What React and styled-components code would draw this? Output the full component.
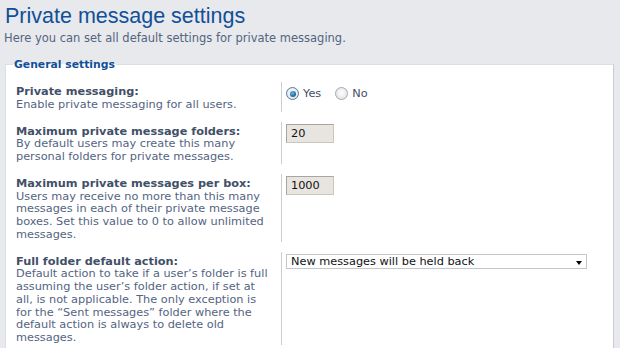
import React from 'react'
import styled, { createGlobalStyle } from 'styled-components'

const GlobalStyle = createGlobalStyle`
  html, body {
    margin: 0;
    padding: 0;
    background: #e7e9ec;
    font-family: "DejaVu Sans", Verdana, sans-serif;
  }
`

const Page = styled.div`
  width: 620px;
  height: 348px;
  overflow: hidden;
  padding: 3px 6px 0 5px;
  box-sizing: border-box;
`

const Title = styled.h1`
  margin: 0;
  font-family: "Liberation Sans", Arial, sans-serif;
  font-weight: normal;
  font-size: 21.5px;
  line-height: 26px;
  color: #115098;
`

const Intro = styled.p`
  margin: 2px 0 0 -1px;
  font-size: 11.5px;
  line-height: 14px;
  color: #536482;
`

const Fieldset = styled.fieldset`
  margin: 13px 0 0 0;
  padding: 11px 10px 0 10px;
  background: #fff;
  border: 1px solid #dcdfe3;
  border-right-color: #c9ccd0;
  min-width: 0;
`

const Legend = styled.legend`
  padding: 0 1px;
  margin-left: -3px;
  font-size: 10.8px;
  font-weight: bold;
  color: #115098;
`

const Row = styled.div`
  display: grid;
  grid-template-columns: 265px 1fr;
  margin-bottom: 10px;
`

const Term = styled.div`
  padding: 4px 0 0 0;
  font-size: 11.3px;
  line-height: 12.75px;
  white-space: nowrap;
  overflow: hidden;
  color: #536482;
`

const Label = styled.div`
  font-weight: bold;
  color: #425067;
`

const Value = styled.div`
  border-left: 1px solid #cccccc;
  padding: 2px 0 0 4px;
  display: flex;
  align-items: flex-start;
  gap: 14px;
`

const Choice = styled.label`
  display: flex;
  align-items: center;
  gap: 4px;
  margin-top: 3px;
  font-size: 11.3px;
  color: #425067;
`

const Radio = styled.span`
  width: 11px;
  height: 11px;
  border-radius: 50%;
  border: 1px solid ${p => (p.checked ? '#5b7a99' : '#a4a8ad')};
  background: radial-gradient(circle at 50% 45%, #ffffff 0%, #e4e6e8 70%, #d0d3d6 100%);
  display: flex;
  align-items: center;
  justify-content: center;

  &::after {
    content: '';
    display: ${p => (p.checked ? 'block' : 'none')};
    width: 6px;
    height: 6px;
    border-radius: 50%;
    background: radial-gradient(circle at 40% 35%, #6fb9e6 0%, #1a6fa8 60%, #0c4a78 100%);
  }
`

const TextInput = styled.div`
  width: 42px;
  height: 17px;
  box-sizing: content-box;
  border: 1px solid #c9c6c0;
  border-top-color: #a9a6a1;
  border-left-color: #a9a6a1;
  background: #e8e5e0;
  font-size: 11.3px;
  line-height: 17px;
  padding-left: 4px;
  color: #111;
`

const Select = styled.div`
  position: relative;
  width: 295px;
  height: 13px;
  border: 1px solid #c3c7cc;
  background: #fff;
  font-size: 11.3px;
  line-height: 13px;
  padding-left: 4px;
  color: #111;

  &::after {
    content: '';
    position: absolute;
    right: 4px;
    top: 6px;
    border-left: 3.5px solid transparent;
    border-right: 3.5px solid transparent;
    border-top: 4px solid #000;
  }
`

const settings = [
  {
    label: 'Private messaging:',
    desc: ['Enable private messaging for all users.'],
    type: 'radio',
  },
  {
    label: 'Maximum private message folders:',
    desc: ['By default users may create this many', 'personal folders for private messages.'],
    type: 'text',
    value: '20',
  },
  {
    label: 'Maximum private messages per box:',
    desc: [
      'Users may receive no more than this many',
      'messages in each of their private message',
      'boxes. Set this value to 0 to allow unlimited',
      'messages.',
    ],
    type: 'text',
    value: '1000',
  },
  {
    label: 'Full folder default action:',
    desc: [
      'Default action to take if a user\u2019s folder is full',
      'assuming the user\u2019s folder action, if set at',
      'all, is not applicable. The only exception is',
      'for the \u201cSent messages\u201d folder where the',
      'default action is always to delete old',
      'messages.',
    ],
    type: 'select',
    value: 'New messages will be held back',
  },
]

const Control = ({ item }) => {
  if (item.type === 'radio') {
    return (
      <>
        <Choice><Radio checked />Yes</Choice>
        <Choice><Radio />No</Choice>
      </>
    )
  }
  if (item.type === 'select') return <Select>{item.value}</Select>
  return <TextInput>{item.value}</TextInput>
}

export default function App() {
  return (
    <Page>
      <GlobalStyle />
      <Title>Private message settings</Title>
      <Intro>Here you can set all default settings for private messaging.</Intro>
      <Fieldset>
        <Legend>General settings</Legend>
        {settings.map(item => (
          <Row key={item.label}>
            <Term>
              <Label>{item.label}</Label>
              {item.desc.map(line => <div key={line}>{line}</div>)}
            </Term>
            <Value>
              <Control item={item} />
            </Value>
          </Row>
        ))}
      </Fieldset>
    </Page>
  )
}
